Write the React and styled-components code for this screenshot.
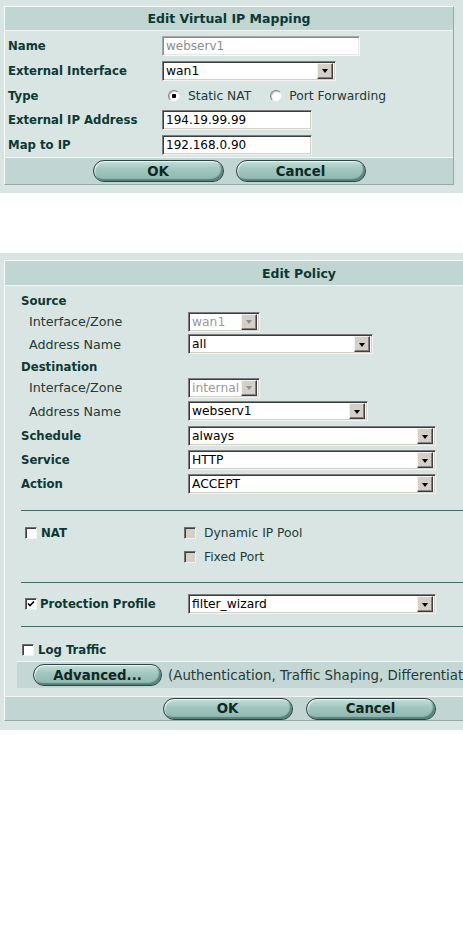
import React from "react";
import styled, { createGlobalStyle, css } from "styled-components";

const teal = "#d8e5e3";
const band = "#c1d5d2";
const ink = "#0d3833";
const text = "#253a37";

const GlobalStyle = createGlobalStyle`
  html, body {
    margin: 0;
    padding: 0;
    background: #fff;
    overflow-x: hidden;
  }
  body {
    font-family: "DejaVu Sans", Verdana, sans-serif;
    font-size: 12.7px;
    color: ${text};
  }
`;

const Page = styled.main`
  display: flex;
  flex-direction: column;
  gap: 60px;
`;

const Shot = styled.section`
  background: ${teal};
  padding: ${(p) => p.$pad};
  overflow: hidden;
`;

const Panel = styled.div`
  width: ${(p) => p.$w}px;
  box-sizing: border-box;
  border: 1px solid;
  border-color: #f6faf9 #98a8a5 #98a8a5 #f6faf9;
  background: ${teal};
`;

const Header = styled.div`
  height: ${(p) => p.$h}px;
  line-height: ${(p) => p.$h + 1}px;
  background: ${band};
  border-bottom: 1px solid #eef5f3;
  text-align: center;
  font-weight: bold;
  font-size: 12.5px;
  color: ${ink};
`;

const Body = styled.div`
  padding: ${(p) => p.$pad};
`;

const Row = styled.div`
  display: flex;
  align-items: center;
  height: ${(p) => p.$h}px;
  margin-top: ${(p) => p.$mt || 0}px;
`;

const Label = styled.div`
  flex: none;
  display: flex;
  align-items: center;
  width: ${(p) => p.$w}px;
  box-sizing: border-box;
  padding-left: ${(p) => (p.$sub ? 8 : 0)}px;
  font-weight: ${(p) => (p.$sub ? "normal" : "bold")};
  font-size: ${(p) => (p.$sub ? 12.7 : 11.7)}px;
  color: ${(p) => (p.$sub ? text : ink)};
  white-space: nowrap;
`;

const bevel = css`
  box-sizing: border-box;
  border: 1px solid;
  border-color: #7c7c7c #f4f4f4 #f4f4f4 #7c7c7c;
  box-shadow: inset 1px 1px 0 #3c3c3c, inset -1px -1px 0 #d4d0c8;
  background: #fff;
`;

const TextBox = styled.div`
  ${bevel}
  width: ${(p) => p.$w}px;
  height: 20px;
  line-height: 18px;
  padding-left: 3px;
  font-size: 12px;
  color: #000;
  white-space: nowrap;

  ${(p) =>
    p.$muted &&
    css`
      border-color: #a6a6a6 #fbfbfb #fbfbfb #a6a6a6;
      box-shadow: inset 1px 1px 0 #8a8a8a, inset -1px -1px 0 #e6e6e6;
      color: #8d8d8d;
    `}
`;

const SelectBox = styled.div`
  ${bevel}
  display: flex;
  align-items: center;
  width: ${(p) => p.$w}px;
  height: 20px;
  padding: 2px 2px 2px 3px;
  font-size: 12.3px;
  color: ${(p) => (p.$disabled ? "#9a9a9a" : "#000")};
  white-space: nowrap;

  span {
    flex: 1;
    overflow: hidden;
  }
`;

const ArrowButton = styled.i`
  flex: none;
  width: 16px;
  height: 16px;
  box-sizing: border-box;
  display: flex;
  align-items: center;
  justify-content: center;
  background: #d4d0c8;
  border: 1px solid;
  border-color: #f2f2f2 #404040 #404040 #f2f2f2;
  box-shadow: inset -1px -1px 0 #808080;

  &::after {
    content: "";
    border-left: 3.5px solid transparent;
    border-right: 3.5px solid transparent;
    border-top: 4px solid ${(p) => (p.$disabled ? "#8e8e8e" : "#000")};
    margin-top: 1px;
  }
`;

function Select({ value, width, disabled }) {
  return (
    <SelectBox $w={width} $disabled={disabled}>
      <span>{value}</span>
      <ArrowButton $disabled={disabled} />
    </SelectBox>
  );
}

const RadioDot = styled.i`
  flex: none;
  width: 12px;
  height: 12px;
  box-sizing: border-box;
  border-radius: 50%;
  margin-left: ${(p) => p.$ml}px;
  background: ${(p) =>
    p.$on
      ? "radial-gradient(circle, #000 0 2px, #fff 2.5px)"
      : "#fff"};
  border: 1px solid;
  border-color: #808080 #e8e8e8 #e8e8e8 #808080;
  box-shadow: inset 1px 1px 0 #c8c8c8;
`;

const Option = styled.span`
  margin-left: ${(p) => p.$ml}px;
  font-size: 12.3px;
  color: ${text};
`;

const CheckBox = styled.i`
  flex: none;
  width: 12px;
  height: 12px;
  box-sizing: border-box;
  margin-left: ${(p) => p.$ml || 0}px;
  margin-right: ${(p) => p.$mr}px;
  border: 1px solid;
  border-color: #6f6f6f #f2f2f2 #f2f2f2 #6f6f6f;
  box-shadow: inset 1px 1px 0 #404040;
  background: ${(p) => (p.$disabled ? "#d4d0c8" : "#fff")};
  display: flex;
  align-items: center;
  justify-content: center;
`;

function Check({ checked, disabled, ml, mr }) {
  return (
    <CheckBox $disabled={disabled} $ml={ml} $mr={mr}>
      {checked && (
        <svg width="8" height="8" viewBox="0 0 8 8">
          <path d="M1 3.5 L3 5.5 L7 1.5" fill="none" stroke="#000" strokeWidth="1.6" />
        </svg>
      )}
    </CheckBox>
  );
}

const Rule = styled.hr`
  margin: ${(p) => p.$mt}px 0 0 0;
  border: none;
  height: 1px;
  background: #3f6d66;
`;

const ButtonBar = styled.div`
  display: flex;
  justify-content: center;
  align-items: center;
  gap: ${(p) => p.$gap}px;
  height: ${(p) => p.$h}px;
  background: ${band};
  border-top: 1px solid #f2f7f6;
`;

const PillButton = styled.button`
  width: ${(p) => p.$w}px;
  height: 22px;
  padding: 0;
  border-radius: 11px;
  border: 1px solid #2c4743;
  background: linear-gradient(#c2ded8, #a2c8c0 40%, #8db6ae);
  box-shadow: inset -2px -2px 1px rgba(44, 84, 77, 0.55),
    inset 1px 1px 1px rgba(255, 255, 255, 0.7);
  font-family: "DejaVu Sans", Verdana, sans-serif;
  font-weight: bold;
  font-size: 13.3px;
  color: #0f2824;
  cursor: pointer;
`;

const AdvancedBand = styled.div`
  display: flex;
  align-items: center;
  height: 26px;
  margin-left: -4px;
  padding-left: 16px;
  background: #c4d7d4;
  border-top: 1px solid #eef5f3;
  white-space: nowrap;
`;

const Hint = styled.span`
  margin-left: 6px;
  font-size: 13.4px;
  color: ${text};
`;

function VirtualIpMapping() {
  return (
    <Shot $pad="6px 0 8px 4px">
      <Panel $w={450}>
        <Header $h={23}>Edit Virtual IP Mapping</Header>
        <Body $pad="2px 3px 0 3px">
          <Row $h={25}>
            <Label $w={154}>Name</Label>
            <TextBox $w={198} $muted>webserv1</TextBox>
          </Row>
          <Row $h={25}>
            <Label $w={154}>External Interface</Label>
            <Select value="wan1" width={174} />
          </Row>
          <Row $h={25}>
            <Label $w={154}>Type</Label>
            <RadioDot $on $ml={6} />
            <Option $ml={8}>Static NAT</Option>
            <RadioDot $ml={19} />
            <Option $ml={7}>Port Forwarding</Option>
          </Row>
          <Row $h={24}>
            <Label $w={154}>External IP Address</Label>
            <TextBox $w={150}>194.19.99.99</TextBox>
          </Row>
          <Row $h={25}>
            <Label $w={154}>Map to IP</Label>
            <TextBox $w={150}>192.168.0.90</TextBox>
          </Row>
        </Body>
        <ButtonBar $h={26} $gap={12}>
          <PillButton $w={131}>OK</PillButton>
          <PillButton $w={130}>Cancel</PillButton>
        </ButtonBar>
      </Panel>
    </Shot>
  );
}

const policyRows = [
  { h: 21, label: "Source" },
  { h: 21, label: "Interface/Zone", sub: true, select: { value: "wan1", width: 72, disabled: true } },
  { h: 24, label: "Address Name", sub: true, select: { value: "all", width: 185 } },
  { h: 21, label: "Destination" },
  { h: 21, label: "Interface/Zone", sub: true, select: { value: "internal", width: 72, disabled: true } },
  { h: 26, label: "Address Name", sub: true, select: { value: "webserv1", width: 180 } },
  { h: 24, label: "Schedule", select: { value: "always", width: 248 } },
  { h: 24, label: "Service", select: { value: "HTTP", width: 248 } },
  { h: 24, label: "Action", select: { value: "ACCEPT", width: 248 } },
];

function EditPolicy() {
  return (
    <Shot $pad="7px 0 9px 4px">
      <Panel $w={590}>
        <Header $h={24}>Edit Policy</Header>
        <Body $pad="4px 0 8px 16px">
          {policyRows.map((r, i) => (
            <Row key={i} $h={r.h}>
              <Label $w={167} $sub={r.sub}>{r.label}</Label>
              {r.select && <Select {...r.select} />}
            </Row>
          ))}

          <Rule $mt={14} />
          <Row $h={24} $mt={10}>
            <Label $w={163}>
              <Check ml={4} mr={4} />
              NAT
            </Label>
            <Check disabled mr={8} />
            <Option $ml={0}>Dynamic IP Pool</Option>
          </Row>
          <Row $h={24}>
            <Label $w={163} />
            <Check disabled mr={8} />
            <Option $ml={0}>Fixed Port</Option>
          </Row>

          <Rule $mt={13} />
          <Row $h={24} $mt={9}>
            <Label $w={167}>
              <Check checked ml={4} mr={3} />
              Protection Profile
            </Label>
            <Select value="filter_wizard" width={248} />
          </Row>

          <Rule $mt={10} />
          <Row $h={23} $mt={11}>
            <Label $w={167}>
              <Check ml={1} mr={4} />
              Log Traffic
            </Label>
          </Row>
          <AdvancedBand>
            <PillButton $w={129}>Advanced...</PillButton>
            <Hint>(Authentication, Traffic Shaping, Differentiated Services)</Hint>
          </AdvancedBand>
        </Body>
        <ButtonBar $h={23} $gap={13}>
          <PillButton $w={130}>OK</PillButton>
          <PillButton $w={130}>Cancel</PillButton>
        </ButtonBar>
      </Panel>
    </Shot>
  );
}

export default function App() {
  return (
    <>
      <GlobalStyle />
      <Page>
        <VirtualIpMapping />
        <EditPolicy />
      </Page>
    </>
  );
}
